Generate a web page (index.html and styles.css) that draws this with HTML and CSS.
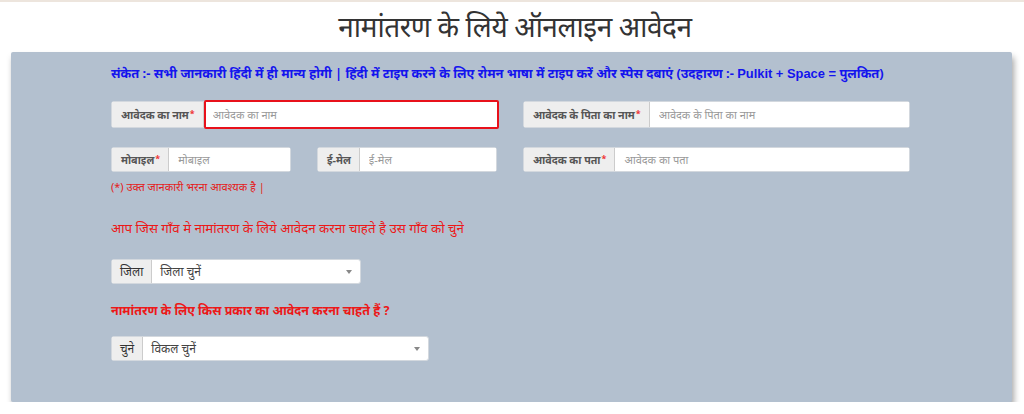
FILE: index.html
```html
<!DOCTYPE html>
<html>
<head>
  <meta charset="utf-8">
  <title>नामांतरण के लिये ऑनलाइन आवेदन</title>
  <link rel="stylesheet" href="styles.css">
</head>
<body>
  <div class="topline"></div>
  <h1 class="title">नामांतरण के लिये ऑनलाइन आवेदन</h1>
  <div class="panel">
    <p class="notice">संकेत :- सभी जानकारी हिंदी में ही मान्य होगी | हिंदी में टाइप करने के लिए रोमन भाषा में टाइप करें और स्पेस दबाएं (उदहारण :- <b>Pulkit + Space =</b> पुलकित)</p>

    <div class="row row1">
      <div class="group wide">
        <span class="addon">आवेदक का नाम <i>*</i></span>
        <input class="field active" type="text" placeholder="आवेदक का नाम">
      </div>
      <div class="group wide">
        <span class="addon">आवेदक के पिता का नाम <i>*</i></span>
        <input class="field" type="text" placeholder="आवेदक के पिता का नाम">
      </div>
    </div>

    <div class="row row2">
      <div class="col">
        <div class="pair">
          <div class="group half">
            <span class="addon">मोबाइल <i>*</i></span>
            <input class="field" type="text" placeholder="मोबाइल">
          </div>
          <div class="group half">
            <span class="addon">ई-मेल</span>
            <input class="field" type="text" placeholder="ई-मेल">
          </div>
        </div>
        <p class="required">(*) उक्त जानकारी भरना आवश्यक है |</p>
      </div>
      <div class="col">
        <div class="group wide">
          <span class="addon">आवेदक का पता <i>*</i></span>
          <input class="field" type="text" placeholder="आवेदक का पता">
        </div>
      </div>
    </div>

    <p class="question">आप जिस गाँव मे नामांतरण के लिये आवेदन करना चाहते है उस गाँव को चुने</p>
    <div class="group select district">
      <span class="addon plain">जिला</span>
      <div class="choice">जिला चुनें <span class="caret"></span></div>
    </div>

    <p class="question strong">नामांतरण के लिए किस प्रकार का आवेदन करना चाहते हैं ?</p>
    <div class="group select kind">
      <span class="addon plain">चुने</span>
      <div class="choice">विकल चुनें <span class="caret"></span></div>
    </div>
  </div>
</body>
</html>
```

FILE: styles.css
```css
body{
  margin: 0;
  background: #fff;
  font-family: "Noto Sans", "Liberation Sans", Arial, sans-serif;
  color: #333;
}
.topline{
  height: 2px;
  background: #ede5dd;
}
.title{
  margin: 8px 0 0 6px;
  height: 42px;
  font-size: 28px;
  font-weight: normal;
  line-height: 32px;
  letter-spacing: -0.4px;
  text-align: center;
  color: #333;
}
.panel{
  width: 1001px;
  height: 350px;
  margin-left: 11px;
  box-sizing: border-box;
  padding: 11px 0 0 100px;
  background: #b3c0cf;
  border-radius: 2px;
  box-shadow: 2px 5px 6px rgba(0,0,0,.35);
}
.notice{
  margin: 0;
  font-size: 12.9px;
  font-weight: bold;
  line-height: 20px;
  color: #1414ee;
}
.notice b{
  font-family: "Liberation Sans", Arial, sans-serif;
}
.row{
  display: flex;
  gap: 25px;
}
.row1{
  margin-top: 17px;
}
.row2{
  margin-top: 19px;
}
.col{
  width: 387px;
}
.pair{
  display: flex;
  gap: 26px;
}
.group{
  display: flex;
  height: 27px;
  border: 1px solid #d3d8de;
  border-radius: 3px;
  background: #fff;
  box-sizing: border-box;
  font-size: 10.7px;
}
.wide{
  width: 387px;
}
.row2 .group{
  height: 25px;
}
.half{
  width: 180px;
}
.addon{
  display: flex;
  align-items: center;
  padding: 0 8px 0 9px;
  background: #eee;
  border-right: 1px solid #ccc;
  font-weight: bold;
  color: #555;
  white-space: nowrap;
}
.addon i{
  font-style: normal;
  font-size: 9px;
  color: #e33;
  margin-left: 1px;
  margin-top: -3px;
}
.field{
  flex: 1;
  min-width: 0;
  border: 0;
  padding: 0 9px;
  font: inherit;
  font-size: 11px;
  color: #555;
  background: #fff;
  outline: none;
}
.field::placeholder{
  color: #999;
}
.field.active{
  border: 2px solid #e8111b;
  margin: -2px -2px -2px 0;
  padding: 0 7px;
  border-radius: 2px;
}
.required{
  margin: 7px 0 0;
  font-size: 11px;
  color: #e42020;
}
.question{
  margin: 24px 0 0;
  font-size: 13.3px;
  line-height: 20px;
  color: #ec1818;
}
.question.strong{
  margin-top: 17px;
  font-size: 12.5px;
  font-weight: bold;
}
.select{
  height: 25px;
  margin-top: 21px;
}
.district{
  width: 250px;
}
.kind{
  width: 318px;
  margin-top: 15px;
}
.addon.plain{
  font-weight: normal;
  padding: 0 8px;
  font-size: 12px;
  color: #333;
}
.choice{
  flex: 1;
  display: flex;
  align-items: center;
  padding: 0 8px;
  font-size: 12px;
  color: #444;
  position: relative;
}
.caret{
  position: absolute;
  right: 8px;
  top: 10px;
  border-left: 3.5px solid transparent;
  border-right: 3.5px solid transparent;
  border-top: 4px solid #888;
}
```
